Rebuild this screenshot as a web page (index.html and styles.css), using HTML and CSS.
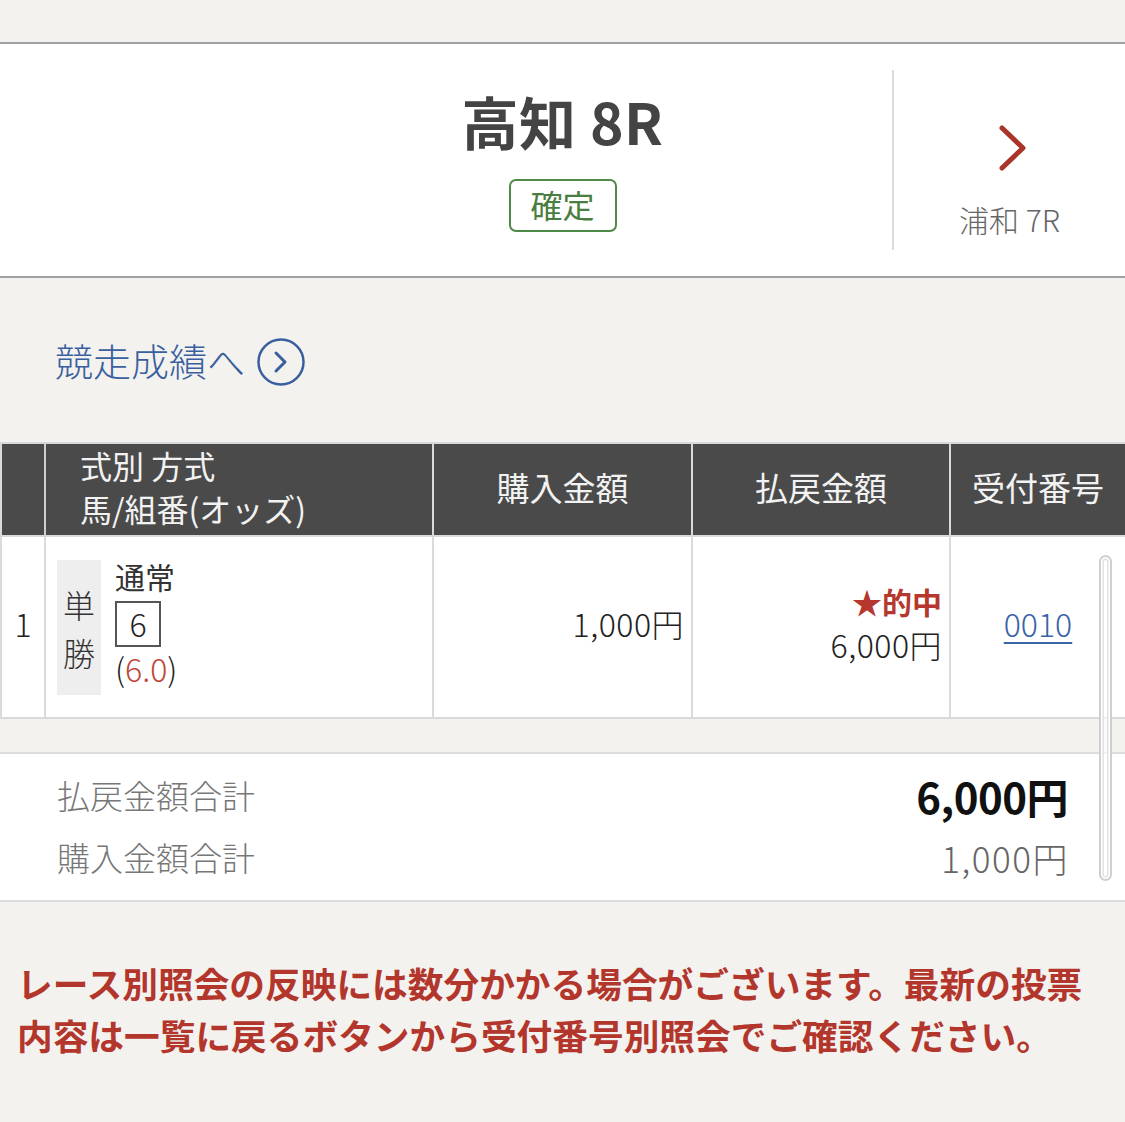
FILE: index.html
```html
<!DOCTYPE html>
<html lang="ja">
<head>
<meta charset="utf-8">
<title>高知 8R</title>
<link rel="stylesheet" href="styles.css">
</head>
<body>
<div class="page">
  <div class="top-gap"></div>

  <header class="race-header">
    <div class="side-spacer"></div>
    <div class="race-main">
      <h1 class="race-title">高知 8R</h1>
      <span class="status-badge">確定</span>
    </div>
    <a class="next-race" href="#">
      <svg class="next-chevron" width="32" height="48" viewBox="0 0 32 48" aria-hidden="true">
        <polyline points="5,4 26,24 5,44" fill="none" stroke="#a8342a" stroke-width="5" stroke-linecap="round" stroke-linejoin="round"/>
      </svg>
      <span class="next-label">浦和 7R</span>
    </a>
  </header>

  <section class="result-link-area">
    <a class="result-link" href="#">
      <span>競走成績へ</span>
      <svg class="circle-arrow" width="48" height="48" viewBox="0 0 48 48" aria-hidden="true">
        <circle cx="24" cy="24" r="22.5" fill="none" stroke="#3a5f9e" stroke-width="2.5"/>
        <polyline points="19,15 28,24 19,33" fill="none" stroke="#3a5f9e" stroke-width="3" stroke-linecap="round" stroke-linejoin="round"/>
      </svg>
    </a>
  </section>

  <table class="bet-table">
    <colgroup>
      <col class="c-no">
      <col class="c-type">
      <col class="c-buy">
      <col class="c-pay">
      <col class="c-recv">
    </colgroup>
    <thead>
      <tr>
        <th></th>
        <th class="th-type">式別 方式<br>馬/組番(オッズ)</th>
        <th>購入金額</th>
        <th>払戻金額</th>
        <th>受付番号</th>
      </tr>
    </thead>
    <tbody>
      <tr>
        <td class="td-no">1</td>
        <td class="td-type">
          <div class="type-wrap">
            <div class="bet-kind">単<br>勝</div>
            <div class="bet-detail">
              <div class="method">通常</div>
              <div class="horse-box">6</div>
              <div class="odds">(<span class="odds-val">6.0</span>)</div>
            </div>
          </div>
        </td>
        <td class="td-amount">1,000円</td>
        <td class="td-amount">
          <div class="hit">★的中</div>
          <div>6,000円</div>
        </td>
        <td class="td-recv"><a href="#">0010</a></td>
      </tr>
    </tbody>
  </table>

  <section class="summary">
    <div class="summary-row">
      <span class="summary-label">払戻金額合計</span>
      <span class="summary-total">6,000円</span>
    </div>
    <div class="summary-row">
      <span class="summary-label">購入金額合計</span>
      <span class="summary-buy">1,000円</span>
    </div>
  </section>

  <p class="notice">レース別照会の反映には数分かかる場合がございます。最新の投票<br>内容は一覧に戻るボタンから受付番号別照会でご確認ください。</p>

  <div class="scroll-indicator"></div>
</div>
</body>
</html>
```

FILE: styles.css
```css
* {
  box-sizing: border-box;
}

html, body {
  margin: 0;
  padding: 0;
}

body {
  background: #f3f2ef;
  font-family: "Noto Sans CJK JP", "Noto Sans", sans-serif;
  color: #333;
}

.page {
  position: relative;
  width: 1125px;
  min-height: 1122px;
}

a {
  text-decoration: none;
}

.top-gap {
  height: 42px;
}

/* Race header */
.race-header {
  display: grid;
  grid-template-columns: 233px 1fr 233px;
  height: 236px;
  background: #fff;
  border-top: 2px solid #a0a0a0;
  border-bottom: 2px solid #a0a0a0;
}

.race-main {
  display: flex;
  flex-direction: column;
  align-items: center;
  padding-top: 48px;
}

.race-title {
  margin: 0;
  font-size: 57px;
  line-height: 1;
  font-weight: 700;
  color: #444;
  letter-spacing: 0.5px;
}

.status-badge {
  margin-top: 30px;
  display: inline-block;
  width: 108px;
  height: 53px;
  border: 2px solid #4f8a48;
  border-radius: 7px;
  color: #4a7d40;
  font-size: 32px;
  line-height: 47px;
  text-align: center;
}

.next-race {
  display: flex;
  flex-direction: column;
  align-items: center;
  margin: 26px 0;
  padding-top: 54px;
  border-left: 2px solid #dcdcdc;
}

.next-chevron {
  display: block;
  margin-left: 6px;
}

.next-label {
  margin-top: 32px;
  font-size: 30px;
  line-height: 1;
  font-weight: 300;
  color: #666;
}

/* Result link */
.result-link-area {
  height: 164px;
  padding: 56px 55px 0;
}

.result-link {
  display: inline-flex;
  align-items: center;
  color: #3a5f9e;
  font-size: 38px;
  font-weight: 300;
  line-height: 48px;
}

.circle-arrow {
  display: block;
  margin-left: 12px;
  margin-top: 4px;
}

/* Table */
.bet-table {
  width: 1125px;
  border-collapse: collapse;
  table-layout: fixed;
  background: #fff;
}

.c-no { width: 44px; }
.c-type { width: 388px; }
.c-buy { width: 259px; }
.c-pay { width: 258px; }
.c-recv { width: 176px; }

.bet-table th,
.bet-table td {
  border: 2px solid #dadada;
}

.bet-table th {
  height: 90px;
  background: #4a4a4a;
  color: #f2f2f2;
  font-size: 33px;
  font-weight: 400;
  line-height: 43px;
  padding: 0 0 5px;
  text-align: center;
}

.bet-table th:first-child {
  border-right-color: #cfcfcf;
}

.bet-table th.th-type {
  text-align: left;
  padding-left: 34px;
  font-size: 32px;
}

.bet-table td {
  height: 182px;
  vertical-align: middle;
  font-size: 32px;
  font-weight: 300;
  color: #222;
  line-height: 44px;
  padding-bottom: 10px;
}

.td-no {
  text-align: center;
}

.bet-table td.td-type {
  padding-left: 11px;
  padding-bottom: 0;
}

.type-wrap {
  display: flex;
  align-items: center;
  gap: 14px;
}

.bet-kind {
  width: 44px;
  height: 135px;
  background: #eeeeee;
  display: flex;
  align-items: center;
  justify-content: center;
  text-align: center;
  font-size: 32px;
  line-height: 48px;
  color: #333;
}

.bet-detail {
  display: flex;
  flex-direction: column;
  align-items: flex-start;
  margin-bottom: 10px;
}

.method {
  font-size: 30px;
  line-height: 40px;
  font-weight: 400;
  color: #333;
}

.horse-box {
  margin-top: 5px;
  width: 46px;
  height: 46px;
  border: 2px solid #555;
  text-align: center;
  font-size: 32px;
  line-height: 40px;
}

.odds {
  font-size: 32px;
  line-height: 42px;
}

.odds-val {
  color: #c0473a;
}

.bet-table td.td-amount {
  text-align: right;
  padding-right: 7px;
  letter-spacing: 0.5px;
}

.hit {
  color: #b5372d;
  font-weight: 700;
  font-size: 30px;
  line-height: 42px;
  letter-spacing: 0;
}

.td-recv {
  text-align: center;
}

.td-recv a {
  color: #3a64a8;
  text-decoration: underline;
  text-decoration-thickness: 2px;
  text-underline-offset: 5px;
}

/* Summary */
.summary {
  margin-top: 33px;
  background: #fff;
  border-top: 2px solid #dcdcdc;
  border-bottom: 2px solid #dcdcdc;
  padding: 10px 57px 12px;
}

.summary-row {
  display: flex;
  justify-content: space-between;
  align-items: center;
  height: 62px;
}

.summary-label {
  font-size: 33px;
  font-weight: 300;
  color: #777;
}

.summary-total {
  font-size: 42px;
  font-weight: 700;
  color: #111;
  letter-spacing: -0.5px;
}

.summary-buy {
  font-size: 35px;
  font-weight: 300;
  color: #666;
  letter-spacing: 1.5px;
  margin-right: -1px;
}

/* Notice */
.notice {
  margin: 55px 0 0;
  padding-left: 17px;
  font-size: 35.7px;
  line-height: 52px;
  font-weight: 700;
  color: #b3362c;
}

/* Scroll indicator overlay */
.scroll-indicator {
  position: absolute;
  left: 1099px;
  top: 555px;
  width: 13px;
  height: 326px;
  border: 2px solid #cfcfcf;
  border-radius: 7px;
  background: rgba(255, 255, 255, 0.6);
  box-shadow: inset 0 0 0 1.5px #fff, inset 0 0 0 3px #e2e2e2;
}
```
